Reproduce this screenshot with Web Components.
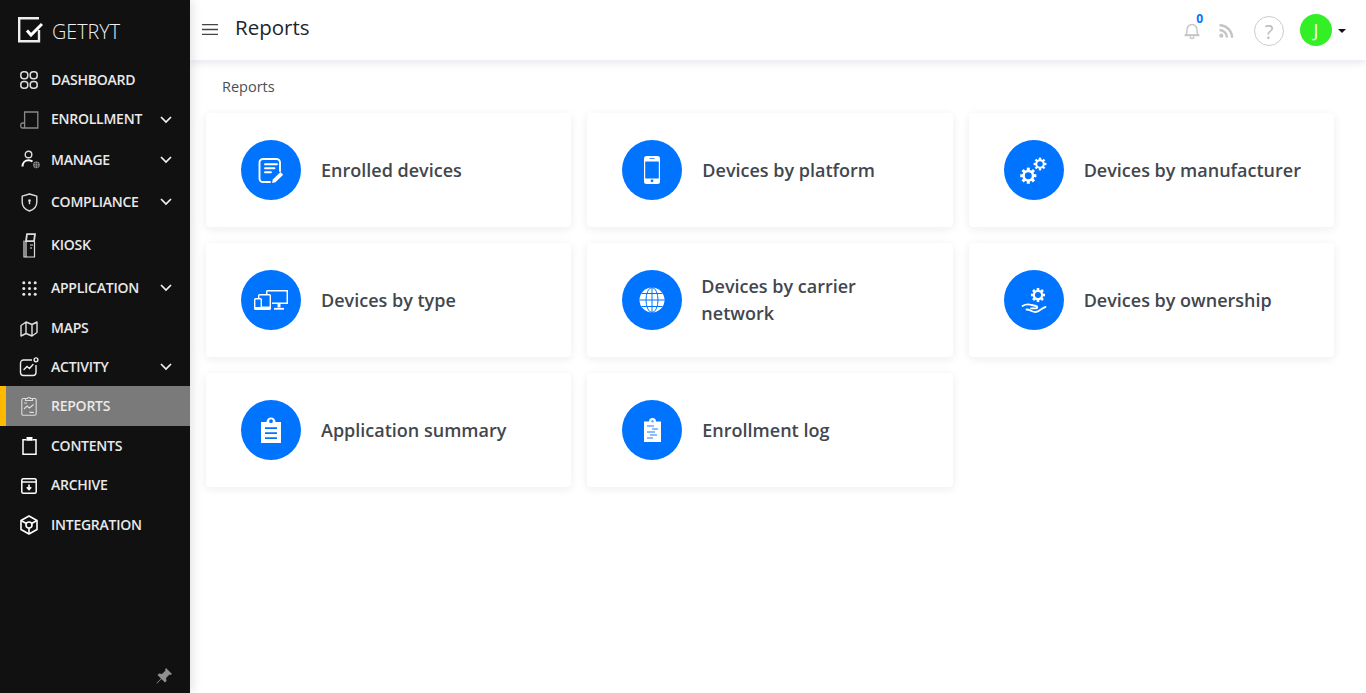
<!DOCTYPE html>
<html>
<head>
<meta charset="utf-8">
<title>Reports</title>
<style>
    html, body { margin: 0; height: 100%; }
    body { font-family: "Open Sans", "Noto Sans", sans-serif; background: #fff; overflow: hidden; }
</style>
</head>
<body>
<app-shell>
    <side-bar slot="side">
        <nav-item label="DASHBOARD" icon="dashboard" h="40"></nav-item>
        <nav-item label="ENROLLMENT" icon="enrollment" h="39" more></nav-item>
        <nav-item label="MANAGE" icon="manage" h="42" more></nav-item>
        <nav-item label="COMPLIANCE" icon="compliance" h="42" more></nav-item>
        <nav-item label="KIOSK" icon="kiosk" h="44" ></nav-item>
        <nav-item label="APPLICATION" icon="application" h="42" more></nav-item>
        <nav-item label="MAPS" icon="maps" h="39"></nav-item>
        <nav-item label="ACTIVITY" icon="activity" h="38" more></nav-item>
        <nav-item label="REPORTS" icon="reports" h="40" active></nav-item>
        <nav-item label="CONTENTS" icon="contents" h="40"></nav-item>
        <nav-item label="ARCHIVE" icon="archive" h="39"></nav-item>
        <nav-item label="INTEGRATION" icon="integration" h="40"></nav-item>
    </side-bar>
    <top-bar slot="top" title="Reports"></top-bar>
    <report-grid crumb="Reports">
        <report-card icon="enrolled">Enrolled devices</report-card>
        <report-card icon="phone">Devices by platform</report-card>
        <report-card icon="gears">Devices by manufacturer</report-card>
        <report-card icon="devices">Devices by type</report-card>
        <report-card icon="globe" tight>Devices by carrier network</report-card>
        <report-card icon="hand">Devices by ownership</report-card>
        <report-card icon="clipboard">Application summary</report-card>
        <report-card icon="log">Enrollment log</report-card>
    </report-grid>
</app-shell>

<script>
const gear = (cx, cy, r) => {
    let teeth = '';
    for (let i = 0; i < 8; i++) {
        teeth += `<rect x="${cx - r * 0.24}" y="${cy - r * 1.28}" width="${r * 0.48}" height="${r * 0.5}" transform="rotate(${i * 45} ${cx} ${cy})"/>`;
    }
    return `<g fill="#fff">${teeth}</g><circle cx="${cx}" cy="${cy}" r="${r * 0.75}" fill="none" stroke="#fff" stroke-width="${r * 0.4}"/>`;
};

const NAV_ICONS = {
    dashboard: `<svg width="18" height="18" viewBox="0 0 18 18" fill="none" stroke="#ddd" stroke-width="1.5"><rect x=".8" y=".8" width="7" height="7" rx="3"/><rect x="10.2" y=".8" width="7" height="7" rx="3"/><rect x=".8" y="10.4" width="7" height="6.8" rx="3"/><rect x="10.2" y="10.4" width="7" height="6.8" rx="3"/></svg>`,
    enrollment: `<svg width="19" height="18" viewBox="0 0 19 18" fill="none" stroke="#8a8a8a" stroke-width="1.3"><path d="M4.600 12V1h13.200v16H2.500A1.700 1.700 0 0 1 .8 15.300v-1.600A1.700 1.700 0 0 1 2.500 12h2.100v5"/></svg>`,
    manage: `<svg width="22" height="20" viewBox="0 0 22 20" fill="none"><circle cx="10.500" cy="4.500" r="3.300" stroke="#ddd" stroke-width="1.400"/><path d="M4.500 16.500c0-4 2.800-6.300 6-6.300 1.600 0 3 .5 4 1.300" stroke="#fff" stroke-width="2"/><circle cx="18.400" cy="14.800" r="3.400" fill="#999"/><path d="M15 13.700h6.800M15 15.900h6.800M17.300 11.500v6.800M19.500 11.500v6.800" stroke="#222" stroke-width=".6"/></svg>`,
    compliance: `<svg width="17" height="19" viewBox="0 0 17 19" fill="none" stroke="#ddd" stroke-width="1.400"><path d="M8.500 1 15.800 3.200V9c0 4.400-3 7.600-7.300 9C4.200 16.600 1.200 13.400 1.200 9V3.200z" stroke-linejoin="round"/><circle cx="8.500" cy="7.600" r="1.300" fill="#ddd" stroke="none"/><path d="M8.500 8v3.200"/></svg>`,
    kiosk: `<svg width="13" height="25" viewBox="0 0 13 25" fill="none" stroke="#ddd" stroke-width="1.200"><path d="M4 1.200h8l-1 7H3z" stroke-width="1.800"/><path d="M1 7.500v16.500h10.500V8.500"/><path d="M7 12h3M7 15h2" stroke-width="1"/><path d="M3 8.500V24"/></svg>`,
    application: `<svg width="15" height="15" viewBox="0 0 15 15" fill="#e5e5e5"><circle cx="1.800" cy="1.800" r="1.500"/><circle cx="7.500" cy="1.800" r="1.500"/><circle cx="13.200" cy="1.800" r="1.500"/><circle cx="1.800" cy="7.500" r="1.500"/><circle cx="7.500" cy="7.500" r="1.500"/><circle cx="13.200" cy="7.500" r="1.500"/><circle cx="1.800" cy="13.200" r="1.500"/><circle cx="7.500" cy="13.200" r="1.500"/><circle cx="13.200" cy="13.200" r="1.500"/></svg>`,
    maps: `<svg width="18" height="16" viewBox="0 0 18 16" fill="none" stroke="#ddd" stroke-width="1.400" stroke-linejoin="round"><path d="M1 4.500 6 1l6 2.500L17 1v10.500L12 15l-6-2.500L1 15zM6 1v11.500M12 3.500V15"/></svg>`,
    activity: `<svg width="20" height="20" viewBox="0 0 20 20" fill="none" stroke="#eee" stroke-width="1.400"><path d="M13 3H4.500A3 3 0 0 0 1.500 6v9.500a3 3 0 0 0 3 3H14a3 3 0 0 0 3-3V8"/><circle cx="17" cy="2.800" r="1.900"/><path d="M5 12.500 8 9.500l2.500 2 3.500-4" stroke-linecap="round"/></svg>`,
    reports: `<svg width="16" height="20" viewBox="0 0 16 20" fill="none" stroke="#ddd" stroke-width="1.100"><path d="M4.500 2.500H2.300A1.500 1.500 0 0 0 .8 4v13.700a1.500 1.500 0 0 0 1.500 1.500h11.400a1.500 1.500 0 0 0 1.500-1.500V4a1.500 1.500 0 0 0-1.500-1.500h-2.200"/><path d="M4.500 4.500V2.500h2a1.600 1.600 0 0 1 3 0h2v2z"/><path d="M3 7h3M3 13l3-3 2.500 2 4-3.500"/><path d="M8.500 16.500h4.500M9 15.500v1M11 15.500v1"/></svg>`,
    contents: `<svg width="15" height="18" viewBox="0 0 15 18" fill="none" stroke="#fff" stroke-width="1.500"><path d="M4.500 2.800H1v14.400h13V2.800h-3.500"/><path d="M4.500 0h6v3.800h-6z" fill="#fff" stroke="none"/></svg>`,
    archive: `<svg width="16" height="16" viewBox="0 0 16 16" fill="none" stroke="#fff" stroke-width="1.500"><rect x=".8" y=".8" width="14.400" height="14.400" rx="1.500"/><path d="M.8 4h14.400"/><path d="M8 6.500v4.800M5.800 9.200 8 11.500l2.200-2.300" stroke-width="1.600"/></svg>`,
    integration: `<svg width="18" height="20" viewBox="0 0 18 20" fill="none" stroke="#fff" stroke-width="1.600" stroke-linejoin="round"><path d="M9 1 17 5.500v9L9 19 1 14.500v-9z"/><circle cx="9" cy="10" r="3"/><path d="M1.500 5.800 6.400 8.500M16.500 5.800 11.600 8.500M9 13v5.500"/></svg>`
};

const CARD_ICONS = {
    enrolled: `<svg width="28" height="28" viewBox="0 0 28 28" fill="none" stroke="#fff" stroke-width="1.900"><path d="M13 26H6a3.500 3.500 0 0 1-3.500-3.500v-16A3.500 3.500 0 0 1 6 3h13.500A3.500 3.500 0 0 1 23 6.500V15" stroke-linecap="round"/><path d="M8 8.300h12M8 12.300h9.500M8 16.300h6" stroke-linecap="round"/><path d="M15 27l.8-3.500 7.700-7.500 2.700 2.700-7.700 7.500z" fill="#fff" stroke="none"/></svg>`,
    phone: `<svg width="16" height="28" viewBox="0 0 16 28"><path fill="#fff" fill-rule="evenodd" d="M2.500 0h11A2.500 2.500 0 0 1 16 2.500v23a2.500 2.500 0 0 1-2.500 2.500h-11A2.500 2.500 0 0 1 0 25.500v-23A2.500 2.500 0 0 1 2.500 0zM1.200 5.500V22.500h13.600V5.500zM8 23.400a1.400 1.400 0 1 0 0 2.800 1.400 1.400 0 0 0 0-2.800zM5.500 2.300v.8h5v-.8z"/></svg>`,
    gears: `<svg width="30" height="30" viewBox="0 0 30 30">${gear(9.300, 20.700, 6.300)}${gear(21, 9, 5)}</svg>`,
    devices: `<svg width="34" height="20" viewBox="0 0 34 20" fill="none" stroke="#fff"><path d="M12.700 .7h20.600v12.600H18" stroke-width="1.500"/><path d="M12.700 .7v3.500" stroke-width="1.500"/><path d="M25 13.300v4.200" stroke-width="3"/><path d="M20 18.800h10" stroke-width="1.800"/><rect x="4.700" y="4.700" width="11.600" height="14.600" rx=".8" fill="#0074ff" stroke-width="1.400"/><rect x="5" y="16.500" width="11" height="3.500" fill="#fff" stroke="none"/><rect x=".7" y="8.700" width="6.600" height="10.600" rx=".8" fill="#0074ff" stroke-width="1.400"/><rect x="1" y="17" width="6" height="3" fill="#fff" stroke="none"/></svg>`,
    globe: `<svg width="26" height="26" viewBox="0 0 26 26"><circle cx="13" cy="13" r="12.500" fill="#fff"/><g fill="none" stroke="#0074ff" stroke-width="1"><ellipse cx="13" cy="13" rx="6" ry="12.500"/><path d="M13 .5v25M.5 13h25M2.500 6.500h21M2.500 19.500h21"/></g></svg>`,
    hand: `<svg width="26" height="28" viewBox="0 0 26 28">${gear(17, 9, 5.500)}<g fill="none" stroke="#fff" stroke-width="1.800" stroke-linecap="round" stroke-linejoin="round"><path d="M1.500 20c3-1.800 6-2 9-1l4.500 1c1.800.4 1.600 2.400-.2 2.400H10"/><path d="M5.500 23.500c3.500 0 5.500 2.500 9 2.500 4 0 6-4.200 10-5"/></g></svg>`,
    clipboard: `<svg width="20" height="26" viewBox="0 0 20 26"><path fill="#fff" fill-rule="evenodd" d="M0 5h5.500a4.500 4.500 0 0 1 9 0H20v21H0zM10 2.300a1.900 1.900 0 1 0 0 3.800 1.900 1.900 0 0 0 0-3.800zM4 10.200V12h12v-1.800zM4 15.200V17h12v-1.800zM4 20.200V22h12v-1.800z"/></svg>`,
    log: `<svg width="17" height="24" viewBox="0 0 17 24"><path fill="#fff" d="M0 3.500h5a3.500 3.500 0 0 1 7 0h5V24H0z"/><circle cx="8.500" cy="3.300" r="1.200" fill="#6aa8ff"/><g stroke="#6aa8ff" stroke-width="1.300"><path d="M3 8h7M8 11h6M3 14h8M6 17h7M3 20h6"/></g></svg>`
};

class AppShell extends HTMLElement {
    connectedCallback() {
        this.attachShadow({ mode: 'open' });
        this.shadowRoot.innerHTML = `
            <style>
                :host { display: grid; grid-template-columns: 190px 1fr; grid-template-rows: 60px 1fr; height: 693px; }
                .side { grid-row: 1 / 3; display: flex; z-index: 3; }
                .top { display: block; z-index: 2; }
                main { min-width: 0; }
            </style>
            <div class="side"><slot name="side"></slot></div>
            <div class="top"><slot name="top"></slot></div>
            <main><slot></slot></main>
        `;
    }
}

class SideBar extends HTMLElement {
    connectedCallback() {
        this.attachShadow({ mode: 'open' });
        this.shadowRoot.innerHTML = `
            <style>
                :host { display: flex; flex-direction: column; width: 190px; background: #111; color: #fff; box-shadow: 2px 0 10px rgba(0, 0, 0, 0.12); }
                .brand { height: 60px; box-sizing: border-box; display: flex; align-items: flex-start; padding: 17px 0 0 18px; color: #eee; }
                .brand span { font-size: 19.800px; font-weight: 300; line-height: 26px; margin: 2px 0 0 9px; }
                .pin { margin-top: auto; padding: 0 17px 8px 0; display: flex; justify-content: flex-end; }
            </style>
            <div class="brand">
                <svg width="25" height="26" viewBox="0 0 25 26" fill="none"><path d="M21 1.200H1.200v23H21V13" stroke="#eee" stroke-width="2.400"/><path d="M9 13.500l4 4.500L24 7" stroke="#fff" stroke-width="3"/></svg>
                <span>GETRYT</span>
            </div>
            <slot></slot>
            <div class="pin">
                <svg width="18" height="18" viewBox="0 0 18 18" fill="#8f8f8f"><path d="M11 1l6 6-1.500 1-1-.5L11 11l.5 3-1.500 1.500-3.500-3.500L2 16.500l-.5-.5L6 11.500 2.500 8 4 6.500l3 .5 3.500-3.500L10 2.500z"/></svg>
            </div>
        `;
    }
}

class NavItem extends HTMLElement {
    connectedCallback() {
        const h = this.getAttribute('h') || 40;
        const more = this.hasAttribute('more');
        this.attachShadow({ mode: 'open' });
        this.shadowRoot.innerHTML = `
            <style>
                :host { display: flex; align-items: center; height: ${h}px; font-size: 14px; font-weight: 600; color: #e9e9e9; letter-spacing: -0.25px; }
                :host([active]) { background: #7a7a7a; box-shadow: inset 6px 0 #ffb900; }
                .ic { width: 22px; margin-left: 18px; margin-right: 11px; display: flex; justify-content: center; align-items: center; }
                .lb { flex: 1; margin-bottom: 2px; }
                .chev { margin-right: 18px; display: flex; }
            </style>
            <span class="ic">${NAV_ICONS[this.getAttribute('icon')] || ''}</span>
            <span class="lb">${this.getAttribute('label')}</span>
            ${more ? `<span class="chev"><svg width="12" height="8" viewBox="0 0 12 8" fill="none" stroke="#f2f2f2" stroke-width="1.700"><path d="M1 1l5 5 5-5"/></svg></span>` : ''}
        `;
    }
}

class TopBar extends HTMLElement {
    connectedCallback() {
        this.attachShadow({ mode: 'open' });
        this.shadowRoot.innerHTML = `
            <style>
                :host { display: flex; align-items: center; height: 60px; background: #fff; box-shadow: 0 2px 8px rgba(60, 60, 110, 0.14); position: relative; padding: 0 20px 4px 12px; box-sizing: border-box; }
                .burger { margin-top: 2px; }
                h1 { margin: 0 0 3px 17px; font-size: 20.500px; font-weight: 500; color: #212529; }
                .tools { margin-left: auto; display: flex; align-items: center; }
                .bell { position: relative; display: flex; margin-right: 19px; margin-top: 5px; }
                .count { position: absolute; top: -10px; right: -3px; font-size: 12px; line-height: 12px; font-weight: 700; color: #0074ff; }
                .rss { display: flex; margin-right: 20px; margin-top: 5px; }
                .help { width: 30px; height: 30px; box-sizing: border-box; border: 1px solid #ccc; border-radius: 50%; color: #bbb; font-size: 20px; display: flex; align-items: center; justify-content: center; margin-right: 16px; margin-top: 6px; }
                .avatar { width: 32px; height: 32px; border-radius: 50%; background: #33f026; color: #fff; font-size: 18px; display: flex; align-items: center; justify-content: center; margin-top: 4px; }
                .caret { width: 0; height: 0; border: 4px solid transparent; border-top-color: #111; border-bottom: 0; margin-left: 6px; margin-top: 5px; }
            </style>
            <svg class="burger" width="16" height="11" viewBox="0 0 16 11" stroke="#444" stroke-width="1.300"><path d="M0 .7h16M0 5.500h16M0 10.300h16"/></svg>
            <h1>${this.getAttribute('title')}</h1>
            <div class="tools">
                <span class="bell">
                    <svg width="16" height="16" viewBox="0 0 16 16" fill="none" stroke="#c4c4c4" stroke-width="1.400"><path d="M1.500 12c1-1 1.500-2 1.500-4V6.500a5 5 0 0 1 10 0V8c0 2 .5 3 1.500 4z" stroke-linejoin="round"/><path d="M.5 12.500h15"/><path d="M6 13.500a2 2 0 0 0 4 0"/></svg>
                    <span class="count">0</span>
                </span>
                <span class="rss">
                    <svg width="15" height="14" viewBox="0 0 16 15" fill="none" stroke="#c4c4c4" stroke-width="2.600"><circle cx="2.500" cy="12.500" r="2.200" fill="#c4c4c4" stroke="none"/><path d="M.5 6.500a8 8 0 0 1 8 8M.5 1.300A13.500 13.500 0 0 1 14 14.800"/></svg>
                </span>
                <span class="help">?</span>
                <span class="avatar">J</span>
                <span class="caret"></span>
            </div>
        `;
    }
}

class ReportGrid extends HTMLElement {
    connectedCallback() {
        this.attachShadow({ mode: 'open' });
        this.shadowRoot.innerHTML = `
            <style>
                :host { display: block; padding: 17px 32px 0 16px; }
                .crumb { font-size: 14.500px; color: #495057; padding-left: 16px; line-height: 19px; margin-bottom: 17px; }
                .grid { display: grid; grid-template-columns: repeat(3, 1fr); gap: 16px; }
            </style>
            <div class="crumb">${this.getAttribute('crumb')}</div>
            <div class="grid"><slot></slot></div>
        `;
    }
}

class ReportCard extends HTMLElement {
    connectedCallback() {
        this.attachShadow({ mode: 'open' });
        this.shadowRoot.innerHTML = `
            <style>
                :host { display: flex; align-items: center; height: 114px; box-sizing: border-box; padding: 0 20px 0 35px; background: #fff; border-radius: 4px; box-shadow: 0 2px 10px rgba(30, 30, 60, 0.08); }
                .dot { flex: none; width: 60px; height: 60px; border-radius: 50%; background: #0074ff; display: flex; align-items: center; justify-content: center; }
                .txt { margin-left: 20px; font-size: 18px; font-weight: 600; line-height: 27px; color: #42474e; }
                :host([tight]) .txt { margin-left: 19px; }
            </style>
            <span class="dot">${CARD_ICONS[this.getAttribute('icon')] || ''}</span>
            <span class="txt"><slot></slot></span>
        `;
    }
}

customElements.define('app-shell', AppShell);
customElements.define('side-bar', SideBar);
customElements.define('nav-item', NavItem);
customElements.define('top-bar', TopBar);
customElements.define('report-grid', ReportGrid);
customElements.define('report-card', ReportCard);
</script>
</body>
</html>
